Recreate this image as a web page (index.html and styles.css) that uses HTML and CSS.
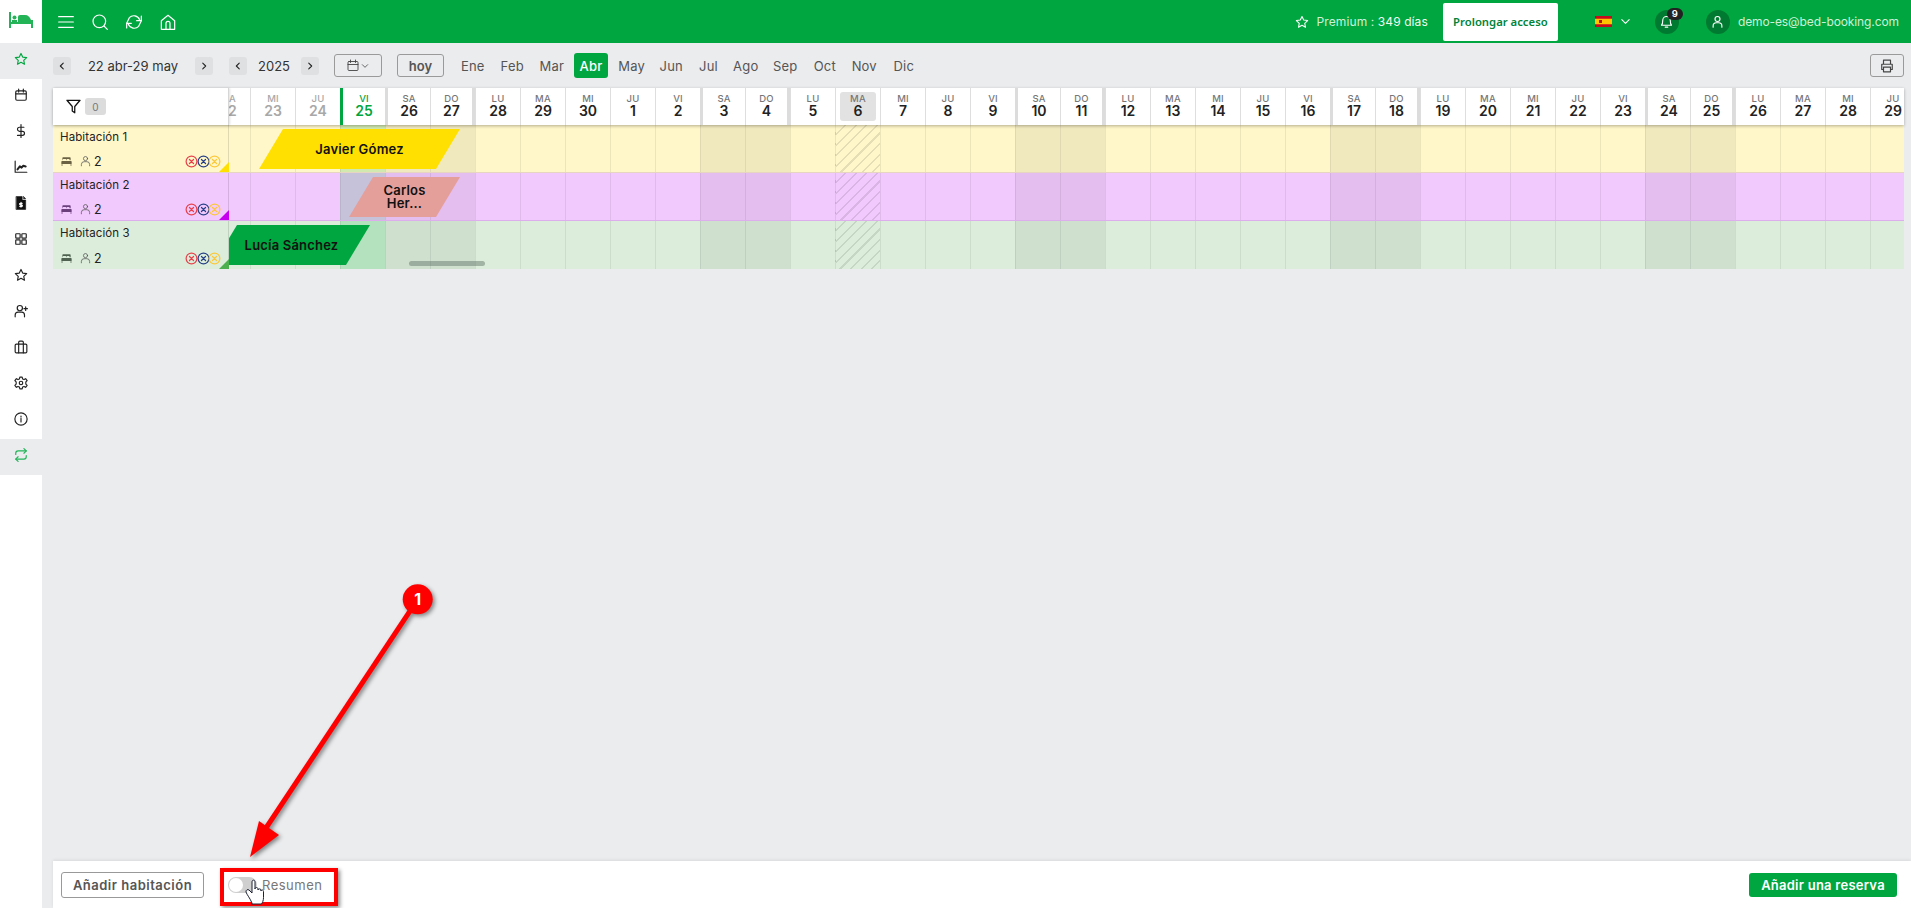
FILE: index.html
```html
<!DOCTYPE html>
<html lang="es">
<head>
<meta charset="utf-8">
<title>Bed-Booking</title>
<link rel="stylesheet" href="styles.css">
</head>
<body>
<svg class="defs" width="0" height="0" aria-hidden="true">
  <symbol id="i-star" viewBox="0 0 24 24"><path d="M12 2.500l2.900 6.200 6.800.9-5 4.700 1.300 6.700-6-3.300-6 3.300 1.300-6.700-5-4.700 6.800-.9z"/></symbol>
  <symbol id="i-left" viewBox="0 0 24 24"><path d="M15 5l-7 7 7 7"/></symbol>
  <symbol id="i-right" viewBox="0 0 24 24"><path d="M9 5l7 7-7 7"/></symbol>
  <symbol id="i-down" viewBox="0 0 24 24"><path d="M4 8l8 8 8-8"/></symbol>
  <symbol id="i-bed" viewBox="0 0 16 14"><path class="fill" d="M3 1.500h10a1 1 0 0 1 1 1V6h-1.500V5a1 1 0 0 0-1-1H9.200a1 1 0 0 0-1 1v1h-.4V5a1 1 0 0 0-1-1H3.500a1 1 0 0 0-1 1v1H2V2.500a1 1 0 0 1 1-1zM1.500 7h13a1 1 0 0 1 1 1v3.500H.5V8a1 1 0 0 1 1-1zM.5 12h2v1.500h-2zM13.500 12h2v1.500h-2z"/></symbol>
  <symbol id="i-person" viewBox="0 0 16 16"><circle cx="8" cy="4.500" r="3"/><path d="M2 15v-2a4 4 0 0 1 4-4h4a4 4 0 0 1 4 4v2"/></symbol>
  <symbol id="i-x" viewBox="0 0 14 14"><circle cx="7" cy="7" r="5.800"/><path d="M4.800 4.800l4.400 4.400M9.200 4.800l-4.400 4.400"/></symbol>
</svg>

<aside class="sidebar">
  <div class="logo">
    <svg class="logo-icon" viewBox="0 0 24 16"><path d="M0 0h2v16H0zM22 8h2v8h-2zM2 10h20v2H2z"/><circle cx="5.500" cy="5.500" r="2"/><path d="M3 8h5v2H3zM9 10V5a2 2 0 0 1 2-2h5c3 0 5 2 6 5v2z"/></svg>
  </div>
  <nav class="side-nav">
    <a class="side-item active"><svg class="ico"><use href="#i-star"/></svg></a>
    <a class="side-item"><svg class="ico" viewBox="0 0 24 24"><rect x="3" y="5" width="18" height="16" rx="2"/><path d="M3 10h18M8 2v5M16 2v5"/></svg></a>
    <a class="side-item"><svg class="ico" viewBox="0 0 24 24"><path d="M12 1v22M17 5.500H9.500a3.500 3.500 0 0 0 0 7h5a3.500 3.500 0 0 1 0 7H6"/></svg></a>
    <a class="side-item"><svg class="ico" viewBox="0 0 24 24"><path d="M2 2v19h20"/><path class="bold" d="M6 16l4-5 3 2 3-3 4 1"/></svg></a>
    <a class="side-item"><svg class="ico solid" viewBox="0 0 24 24"><path d="M4 1h10v6h6v16H4zM16.500 1l3.500 3.500h-3.500z"/><path class="cut" d="M12 11v8M14 12.500h-3a1.300 1.300 0 0 0 0 2.700h2a1.300 1.300 0 0 1 0 2.700h-3"/></svg></a>
    <a class="side-item"><svg class="ico" viewBox="0 0 24 24"><rect x="3" y="3" width="7.500" height="7.500" rx="1"/><rect x="13.500" y="3" width="7.500" height="7.500" rx="1"/><rect x="3" y="13.500" width="7.500" height="7.500" rx="1"/><rect x="13.500" y="13.500" width="7.500" height="7.500" rx="1"/></svg></a>
    <a class="side-item"><svg class="ico"><use href="#i-star"/></svg></a>
    <a class="side-item"><svg class="ico" viewBox="0 0 24 24"><circle cx="10" cy="7" r="4.500"/><path d="M2 22v-3a5 5 0 0 1 5-5h6a5 5 0 0 1 5 5v3M20 5v6M17 8h6"/></svg></a>
    <a class="side-item"><svg class="ico" viewBox="0 0 24 24"><rect x="2" y="7" width="20" height="15" rx="2"/><path d="M8 22V4a2 2 0 0 1 2-2h4a2 2 0 0 1 2 2v18"/></svg></a>
    <a class="side-item"><svg class="ico" viewBox="0 0 24 24"><circle cx="12" cy="12" r="3"/><path d="M10 2h4l.7 3 2.500 1.100 2.700-1.500 2.600 3.400-2.200 2.200v3.600l2.200 2.200-2.600 3.400-2.700-1.500-2.500 1.100-.7 3h-4l-.7-3-2.500-1.100-2.700 1.500L1.500 16l2.200-2.200v-3.600L1.500 8l2.600-3.400 2.700 1.500L9.300 5z"/></svg></a>
    <a class="side-item"><svg class="ico" viewBox="0 0 24 24"><circle cx="12" cy="12" r="10.500"/><path d="M12 11v6M12 7v1.500"/></svg></a>
    <a class="side-item active green"><svg class="ico" viewBox="0 0 24 24"><path d="M17 1l4 4-4 4"/><path d="M3 11V9a4 4 0 0 1 4-4h14M7 23l-4-4 4-4"/><path d="M21 13v2a4 4 0 0 1-4 4H3"/></svg></a>
  </nav>
</aside>

<main class="main">
  <header class="topbar">
    <div class="top-left">
      <svg class="top-ico" viewBox="0 0 24 24"><path d="M1 4h22M1 12h22M1 20h22"/></svg>
      <svg class="top-ico" viewBox="0 0 24 24"><circle cx="11" cy="11" r="9.500"/><path d="M18 18l5 5"/></svg>
      <svg class="top-ico" viewBox="0 0 24 24"><path d="M23 3v7h-7M1 21v-7h7"/><path d="M20.500 8.500A9.500 9.500 0 0 0 5 5.500L1 14M3.500 15.500A9.500 9.500 0 0 0 19 18.500L23 10"/></svg>
      <svg class="top-ico" viewBox="0 0 24 24"><path d="M2 10l10-8 10 8v13H2z"/><path d="M9 23v-9a3 3 0 0 1 6 0v9"/></svg>
    </div>
    <div class="top-right">
      <svg class="premium-star"><use href="#i-star"/></svg>
      <span class="premium">Premium : <b>349 días</b></span>
      <a class="extend">Prolongar acceso</a>
      <svg class="flag" viewBox="0 0 17 11"><rect width="17" height="11" fill="#c60b1e"/><rect y="2.750" width="17" height="5.500" fill="#ffc400"/><rect x="4" y="4" width="3" height="3" fill="#ad1519"/></svg>
      <svg class="chev"><use href="#i-down"/></svg>
      <span class="round bell">
        <svg viewBox="0 0 24 24"><path d="M4 18c2-2 2-4 2-8a6 6 0 0 1 12 0c0 4 0 6 2 8zM10 21h4"/></svg>
        <span class="badge">9</span>
      </span>
      <span class="round user">
        <svg viewBox="0 0 24 24"><circle cx="12" cy="8" r="4"/><path d="M5 21v-2a5 5 0 0 1 5-5h4a5 5 0 0 1 5 5v2"/></svg>
      </span>
      <span class="email">demo-es@bed-booking.com</span>
    </div>
  </header>

  <section class="toolbar">
    <button class="step"><svg><use href="#i-left"/></svg></button>
    <span class="range">22 abr-29 may</span>
    <button class="step"><svg><use href="#i-right"/></svg></button>
    <button class="step year-prev"><svg><use href="#i-left"/></svg></button>
    <span class="year">2025</span>
    <button class="step"><svg><use href="#i-right"/></svg></button>
    <button class="outline cal">
      <svg class="cal-ico" viewBox="0 0 24 24"><rect x="2" y="4" width="20" height="18" rx="2"/><path d="M2 10h20M7 1v5M17 1v5"/></svg>
      <svg class="cal-chev"><use href="#i-down"/></svg>
    </button>
    <button class="outline today-btn">hoy</button>
    <div class="months">
      <span>Ene</span><span>Feb</span><span>Mar</span><span class="on">Abr</span><span>May</span><span>Jun</span><span class="narrow">Jul</span><span>Ago</span><span>Sep</span><span>Oct</span><span>Nov</span><span>Dic</span>
    </div>
    <button class="outline print">
      <svg viewBox="0 0 24 24"><path d="M6 9V2h12v7M6 18H3V9h18v9h-3"/><rect x="6" y="14" width="12" height="8"/></svg>
    </button>
  </section>

  <section class="planner">
    <div class="head-row">
      <div class="corner">
        <svg class="filter" viewBox="0 0 24 24"><path d="M1.500 2h21l-8.500 10v10l-4-3v-7z"/></svg>
        <span class="count">0</span>
      </div>
      <div class="clip">
        <div class="strip">
          <div class="day past"><span>MA</span><b>22</b></div>
          <div class="day past"><span>MI</span><b>23</b></div>
          <div class="day past"><span>JU</span><b>24</b></div>
          <div class="day now"><span>VI</span><b>25</b></div>
          <div class="day sat"><span>SA</span><b>26</b></div>
          <div class="day sun"><span>DO</span><b>27</b></div>
          <div class="day"><span>LU</span><b>28</b></div>
          <div class="day"><span>MA</span><b>29</b></div>
          <div class="day"><span>MI</span><b>30</b></div>
          <div class="day"><span>JU</span><b>1</b></div>
          <div class="day"><span>VI</span><b>2</b></div>
          <div class="day sat"><span>SA</span><b>3</b></div>
          <div class="day sun"><span>DO</span><b>4</b></div>
          <div class="day"><span>LU</span><b>5</b></div>
          <div class="day picked"><span>MA</span><b>6</b></div>
          <div class="day"><span>MI</span><b>7</b></div>
          <div class="day"><span>JU</span><b>8</b></div>
          <div class="day"><span>VI</span><b>9</b></div>
          <div class="day sat"><span>SA</span><b>10</b></div>
          <div class="day sun"><span>DO</span><b>11</b></div>
          <div class="day"><span>LU</span><b>12</b></div>
          <div class="day"><span>MA</span><b>13</b></div>
          <div class="day"><span>MI</span><b>14</b></div>
          <div class="day"><span>JU</span><b>15</b></div>
          <div class="day"><span>VI</span><b>16</b></div>
          <div class="day sat"><span>SA</span><b>17</b></div>
          <div class="day sun"><span>DO</span><b>18</b></div>
          <div class="day"><span>LU</span><b>19</b></div>
          <div class="day"><span>MA</span><b>20</b></div>
          <div class="day"><span>MI</span><b>21</b></div>
          <div class="day"><span>JU</span><b>22</b></div>
          <div class="day"><span>VI</span><b>23</b></div>
          <div class="day sat"><span>SA</span><b>24</b></div>
          <div class="day sun"><span>DO</span><b>25</b></div>
          <div class="day"><span>LU</span><b>26</b></div>
          <div class="day"><span>MA</span><b>27</b></div>
          <div class="day"><span>MI</span><b>28</b></div>
          <div class="day"><span>JU</span><b>29</b></div>
        </div>
      </div>
    </div>

    <div class="room-row yellow">
      <div class="room">
        <div class="room-name">Habitación 1</div>
        <div class="room-meta">
          <svg class="bed"><use href="#i-bed"/></svg>
          <svg class="person"><use href="#i-person"/></svg>
          <span class="guests">2</span>
          <span class="marks"><svg class="mark red"><use href="#i-x"/></svg><svg class="mark blue"><use href="#i-x"/></svg><svg class="mark gold"><use href="#i-x"/></svg></span>
        </div>
      </div>
      <div class="clip track">
        <div class="strip cells"><i></i><i></i><i></i><i></i><i></i><i></i><i></i><i></i><i></i><i></i><i></i><i></i><i></i><i></i><i></i><i></i><i></i><i></i><i></i><i></i><i></i><i></i><i></i><i></i><i></i><i></i><i></i><i></i><i></i><i></i><i></i><i></i><i></i><i></i><i></i><i></i><i></i><i></i></div>
        <div class="booking javier">Javier Gómez</div>
      </div>
    </div>

    <div class="room-row purple">
      <div class="room">
        <div class="room-name">Habitación 2</div>
        <div class="room-meta">
          <svg class="bed"><use href="#i-bed"/></svg>
          <svg class="person"><use href="#i-person"/></svg>
          <span class="guests">2</span>
          <span class="marks"><svg class="mark red"><use href="#i-x"/></svg><svg class="mark blue"><use href="#i-x"/></svg><svg class="mark gold"><use href="#i-x"/></svg></span>
        </div>
      </div>
      <div class="clip track">
        <div class="strip cells"><i></i><i></i><i></i><i></i><i></i><i></i><i></i><i></i><i></i><i></i><i></i><i></i><i></i><i></i><i></i><i></i><i></i><i></i><i></i><i></i><i></i><i></i><i></i><i></i><i></i><i></i><i></i><i></i><i></i><i></i><i></i><i></i><i></i><i></i><i></i><i></i><i></i><i></i></div>
        <div class="booking earlier"></div>
        <div class="booking carlos">Carlos Her...</div>
      </div>
    </div>

    <div class="room-row green last">
      <div class="room">
        <div class="room-name">Habitación 3</div>
        <div class="room-meta">
          <svg class="bed"><use href="#i-bed"/></svg>
          <svg class="person"><use href="#i-person"/></svg>
          <span class="guests">2</span>
          <span class="marks"><svg class="mark red"><use href="#i-x"/></svg><svg class="mark blue"><use href="#i-x"/></svg><svg class="mark gold"><use href="#i-x"/></svg></span>
        </div>
      </div>
      <div class="clip track">
        <div class="strip cells"><i></i><i></i><i></i><i></i><i></i><i></i><i></i><i></i><i></i><i></i><i></i><i></i><i></i><i></i><i></i><i></i><i></i><i></i><i></i><i></i><i></i><i></i><i></i><i></i><i></i><i></i><i></i><i></i><i></i><i></i><i></i><i></i><i></i><i></i><i></i><i></i><i></i><i></i></div>
        <div class="booking lucia">Lucía Sánchez</div>
      </div>
    </div>
    <div class="thumb"></div>
  </section>

  <footer class="footer">
    <button class="add-room">Añadir habitación</button>
    <label class="summary">
      <span class="switch"><span class="knob"></span></span>
      <span>Resumen</span>
    </label>
    <button class="add-booking">Añadir una reserva</button>
  </footer>
</main>

<div class="callout-box"></div>
<svg class="callout" viewBox="0 0 1911 908">
  <g class="callout-arrow">
    <path d="M417.700 599.300L266 828" class="shaft"/>
    <path d="M250 857l9-36 20 14z" class="head"/>
    <circle cx="417.700" cy="599.300" r="15" class="head"/>
  </g>
  <text x="417.700" y="605" class="callout-num">1</text>
  <path class="hand" d="M252 903c-2-5-5-8-6-11-.500-2 2-3 3-2l3 3v-11c0-2.500 3-2.500 3 0v7c0-2 3-2 3 0v1c0-1.500 3-1.500 3 0v1c0-1.500 2.500-1.500 2.500 .5v6c0 3-1 5-2 6.500h-9.500z"/>
</svg>
</body>
</html>
```
FILE: styles.css
```css
* { box-sizing: border-box; }
html, body { height: 100%; }
body {
  margin: 0;
  height: 100vh;
  overflow: hidden;
  display: flex;
  position: relative;
  background: #ebecee;
  color: #222;
  font-family: Inter, "Liberation Sans", sans-serif;
  font-size: 13px;
}
button { font: inherit; padding: 0; cursor: pointer; }
.defs { position: absolute; }
svg { fill: none; stroke: currentColor; stroke-width: 2; stroke-linecap: round; stroke-linejoin: round; display: block; }

/* sidebar */
.sidebar { width: 42px; flex: none; background: #fff; }
.logo { height: 43px; display: flex; align-items: center; justify-content: center; padding-bottom: 3px; }
.logo-icon { width: 24px; height: 16px; fill: #22b457; stroke: none; }
.side-item { height: 36px; padding-bottom: 4px; display: flex; align-items: center; justify-content: center; color: #222; }
.side-item.active { background: #ebecee; color: #00a63f; }
.side-item.green { color: #22b457; }
.ico { width: 14px; height: 14px; stroke-width: 2; }
.ico .bold { stroke-width: 3.500; }
.ico.solid { fill: #111; stroke: #111; stroke-width: 1; }
.ico .cut { stroke: #fff; fill: none; stroke-width: 2; }

/* main */
.main { flex: 1; min-width: 0; display: flex; flex-direction: column; }

.topbar { height: 43px; flex: none; background: #00a63f; color: #fff; display: flex; justify-content: space-between; align-items: center; }
.top-left { display: flex; align-items: center; gap: 18px; padding-left: 16px; }
.top-ico { width: 16px; height: 16px; stroke-width: 1.800; }
.top-right { display: flex; align-items: center; height: 43px; font-size: 12px; padding-right: 12px; }
.premium-star { width: 14px; height: 14px; stroke-width: 1.800; margin-right: 8px; }
.premium { color: #cdf0d8; white-space: nowrap; letter-spacing: .1px; }
.premium b { font-weight: 400; color: #eefaf2; }
.extend { width: 115px; height: 38px; margin: 0 0 0 15px; background: #fff; color: #00843a; border-radius: 2px; display: flex; align-items: center; justify-content: center; font-family: "Noto Sans", sans-serif; font-weight: 600; font-size: 11.300px; white-space: nowrap; }
.flag { width: 17px; height: 11px; stroke: none; margin-left: 37px; }
.chev { width: 11px; height: 11px; margin-left: 8px; stroke-width: 2.400; }
.round { width: 24px; height: 24px; border-radius: 50%; background: #007a30; display: flex; align-items: center; justify-content: center; position: relative; flex: none; }
.round svg { width: 15px; height: 15px; stroke-width: 1.800; }
.bell { margin-left: 24px; }
.badge { position: absolute; top: -2px; left: 12px; width: 16px; height: 12px; border-radius: 6px; background: #222; color: #fff; font-size: 9.500px; font-weight: 600; line-height: 12px; text-align: center; }
.user { margin-left: 27px; }
.email { margin-left: 8px; color: #cdf0d8; white-space: nowrap; letter-spacing: -.1px; }

.toolbar { height: 45px; flex: none; display: flex; align-items: center; padding: 0 7px 0 11px; color: #333; }
.step { width: 18px; height: 18px; border: 0; border-radius: 3px; background: #dfe0e2; color: #222; display: flex; align-items: center; justify-content: center; }
.step svg { width: 10px; height: 10px; stroke-width: 2.600; }
.range { width: 124px; text-align: center; font-size: 13px; white-space: nowrap; }
.year-prev { margin-left: 16px; }
.year { width: 54px; text-align: center; font-size: 13px; }
.outline { height: 23px; border: 1px solid #9a9a9a; border-radius: 3px; background: transparent; color: #444; display: flex; align-items: center; justify-content: center; }
.cal { width: 48px; margin-left: 15px; gap: 2px; }
.cal-ico { width: 12px; height: 13px; stroke-width: 1.800; }
.cal-chev { width: 8px; height: 8px; stroke-width: 2.400; }
.today-btn { width: 47px; margin-left: 15px; font-weight: 600; font-size: 13px; color: #555; }
.months { display: flex; align-items: center; margin-left: 9px; flex: 1; font-size: 13px; color: #555; letter-spacing: .2px; }
.months span { height: 25px; width: 39.500px; display: flex; align-items: center; justify-content: center; border-radius: 3px; }
.months .on { width: 34px; margin: 0 4px 0 2.500px; background: #00a63f; color: #fff; font-weight: 500; }
.months .narrow { width: 35px; }
.print { width: 34px; }
.print svg { width: 14px; height: 14px; stroke-width: 2; }

/* planner */
.planner { margin: 0 7px 0 11px; position: relative; flex: none; }
.head-row { display: flex; height: 37px; position: relative; z-index: 1; box-shadow: 0 1px 3px rgba(0,0,0,.3); background: #fff; }
.corner { width: 176px; flex: none; display: flex; align-items: center; gap: 4px; padding-left: 13px; border-right: 1px solid #d6d6d6; background: #fff; box-shadow: 1px 0 2px rgba(0,0,0,.12); position: relative; z-index: 1; }
.filter { width: 15px; height: 15px; color: #111; stroke-width: 2; }
.count { width: 21px; height: 17px; background: #dcdcdc; border-radius: 3px; color: #777; font-size: 10px; display: flex; align-items: center; justify-content: center; }
.clip { flex: 1; min-width: 0; overflow: hidden; position: relative; }
.strip { display: grid; grid-template-columns: repeat(38, 45px); margin-left: -24px; width: 1710px; height: 100%; }
.day { display: flex; flex-direction: column; align-items: center; justify-content: center; border-left: 1px solid #dedede; line-height: 1; padding-bottom: 1px; position: relative; background: #fff; }
.day span { font-size: 9.500px; color: #777; font-weight: 500; margin-bottom: 1px; letter-spacing: .2px; }
.day b { font-size: 14px; font-weight: 600; color: #222; }
.day.past span, .day.past b { color: #a8a8a8; }
.day.now { border-left: 3px solid #00a63f; }
.day.now span, .day.now b { color: #00a63f; }
.day.sat { border-left: 3px solid #dcdcdc; }
.day.sun { border-right: 3px solid #dcdcdc; }
.day.picked::before { content: ""; position: absolute; left: 4px; right: 4px; top: 4px; bottom: 4px; background: #e2e2e2; border-radius: 3px; }
.day.picked span, .day.picked b { position: relative; }

.room-row { display: flex; height: 48px; border-bottom: 1px solid rgba(120,60,160,.18); }
.room-row.last { border-bottom: 0; }
.yellow { background: #fff7c9; --tip: #ffe000; }
.purple { background: #f2c9fd; --tip: #c800f0; }
.green { background: #dceedb; --tip: #4caf50; }
.room { width: 176px; flex: none; padding: 4px 7px 3px; position: relative; display: flex; flex-direction: column; justify-content: space-between; border-right: 1px solid rgba(0,0,0,.12); }
.room::after { content: ""; position: absolute; right: -1px; bottom: 0; width: 10px; height: 10px; background: var(--tip); clip-path: polygon(100% 0, 100% 100%, 0 100%); }
.room-name { font-size: 11.500px; line-height: 16px; color: #222; letter-spacing: .1px; }
.room-meta { display: flex; align-items: center; height: 16px; }
.bed { width: 11px; height: 10px; margin-left: 1px; stroke: none; fill: #6b6244; }
.purple .bed { fill: #6a3f7c; }
.green .bed { fill: #4f6150; }
.bed .fill { fill: inherit; }
.person { width: 11px; height: 12px; margin-left: 8px; stroke-width: 1.100; color: #555; }
.guests { margin-left: 3px; font-size: 12.500px; color: #222; }
.marks { margin-left: auto; display: flex; }
.mark { width: 13px; height: 13px; stroke-width: 1.300; margin-left: -1.500px; }
.red { color: #e8404a; }
.blue { color: #263f86; }
.gold { color: #fcc83a; }

.cells i { display: block; border-left: 1px solid rgba(0,0,0,.07); height: 48px; }
.cells i:nth-child(7n+5), .cells i:nth-child(7n+6) { background: rgba(0,0,0,.055); }
.cells i:nth-child(4) { background: rgba(0,166,63,.18); }
.cells i:nth-child(15) { background: repeating-linear-gradient(135deg, transparent 0 6px, rgba(0,0,0,.1) 6px 7.500px); }

.booking { position: absolute; top: 4px; height: 40px; display: flex; align-items: center; justify-content: center; text-align: center; font-weight: 600; font-size: 13px; line-height: 13px; letter-spacing: .2px; color: #111; padding: 0 24px; clip-path: polygon(24px 0, 100% 0, calc(100% - 24px) 100%, 0 100%); }
.javier { left: 30px; width: 201px; background: #ffe000; }
.carlos { left: 120px; width: 111px; background: #e49f9b; }
.earlier { left: -18px; width: 24px; padding: 0; background: #e49f9b; }
.lucia { left: -16px; width: 157px; background: #00a63f; }
.thumb { position: absolute; left: 356px; top: 173px; width: 76px; height: 5px; border-radius: 3px; background: rgba(90,110,100,.45); z-index: 2; }

/* footer */
.footer { margin: auto 0 0 11px; height: 47px; flex: none; background: #fff; display: flex; align-items: center; padding: 0 14px 0 8px; box-shadow: 0 -1px 3px rgba(0,0,0,.08); }
.add-room { width: 143px; height: 26px; border: 1px solid #999; border-radius: 3px; background: #fff; color: #555; font-weight: 600; font-size: 13px; letter-spacing: .5px; }
.summary { display: flex; align-items: center; margin-left: 24px; gap: 5px; color: #777; font-size: 13px; letter-spacing: .5px; }
.switch { width: 29px; height: 16px; border-radius: 8px; background: #cfcfcf; position: relative; display: block; }
.knob { position: absolute; left: 1px; top: 1px; width: 14px; height: 14px; border-radius: 50%; background: #fff; }
.add-booking { margin-left: auto; width: 148px; height: 24px; border: 0; border-radius: 3px; background: #00a63f; color: #fff; font-weight: 600; font-size: 13px; letter-spacing: .25px; }

/* annotation */
.callout-box { position: absolute; left: 220px; top: 868px; width: 118px; height: 38px; border: 4px solid #f00; box-shadow: 2px 2px 4px rgba(0,0,0,.45); }
.callout { position: absolute; left: 0; top: 0; width: 1911px; height: 908px; pointer-events: none; }
.callout-arrow { filter: drop-shadow(2px 2px 2px rgba(0,0,0,.45)); }
.shaft { stroke: #f00; stroke-width: 5; stroke-linecap: butt; }
.head { fill: #f00; stroke: none; }
.callout-num { fill: #fff; stroke: none; font-family: Inter, sans-serif; font-weight: 700; font-size: 16px; text-anchor: middle; }
.hand { fill: #fff; stroke: #1c2233; stroke-width: 1; }
```
